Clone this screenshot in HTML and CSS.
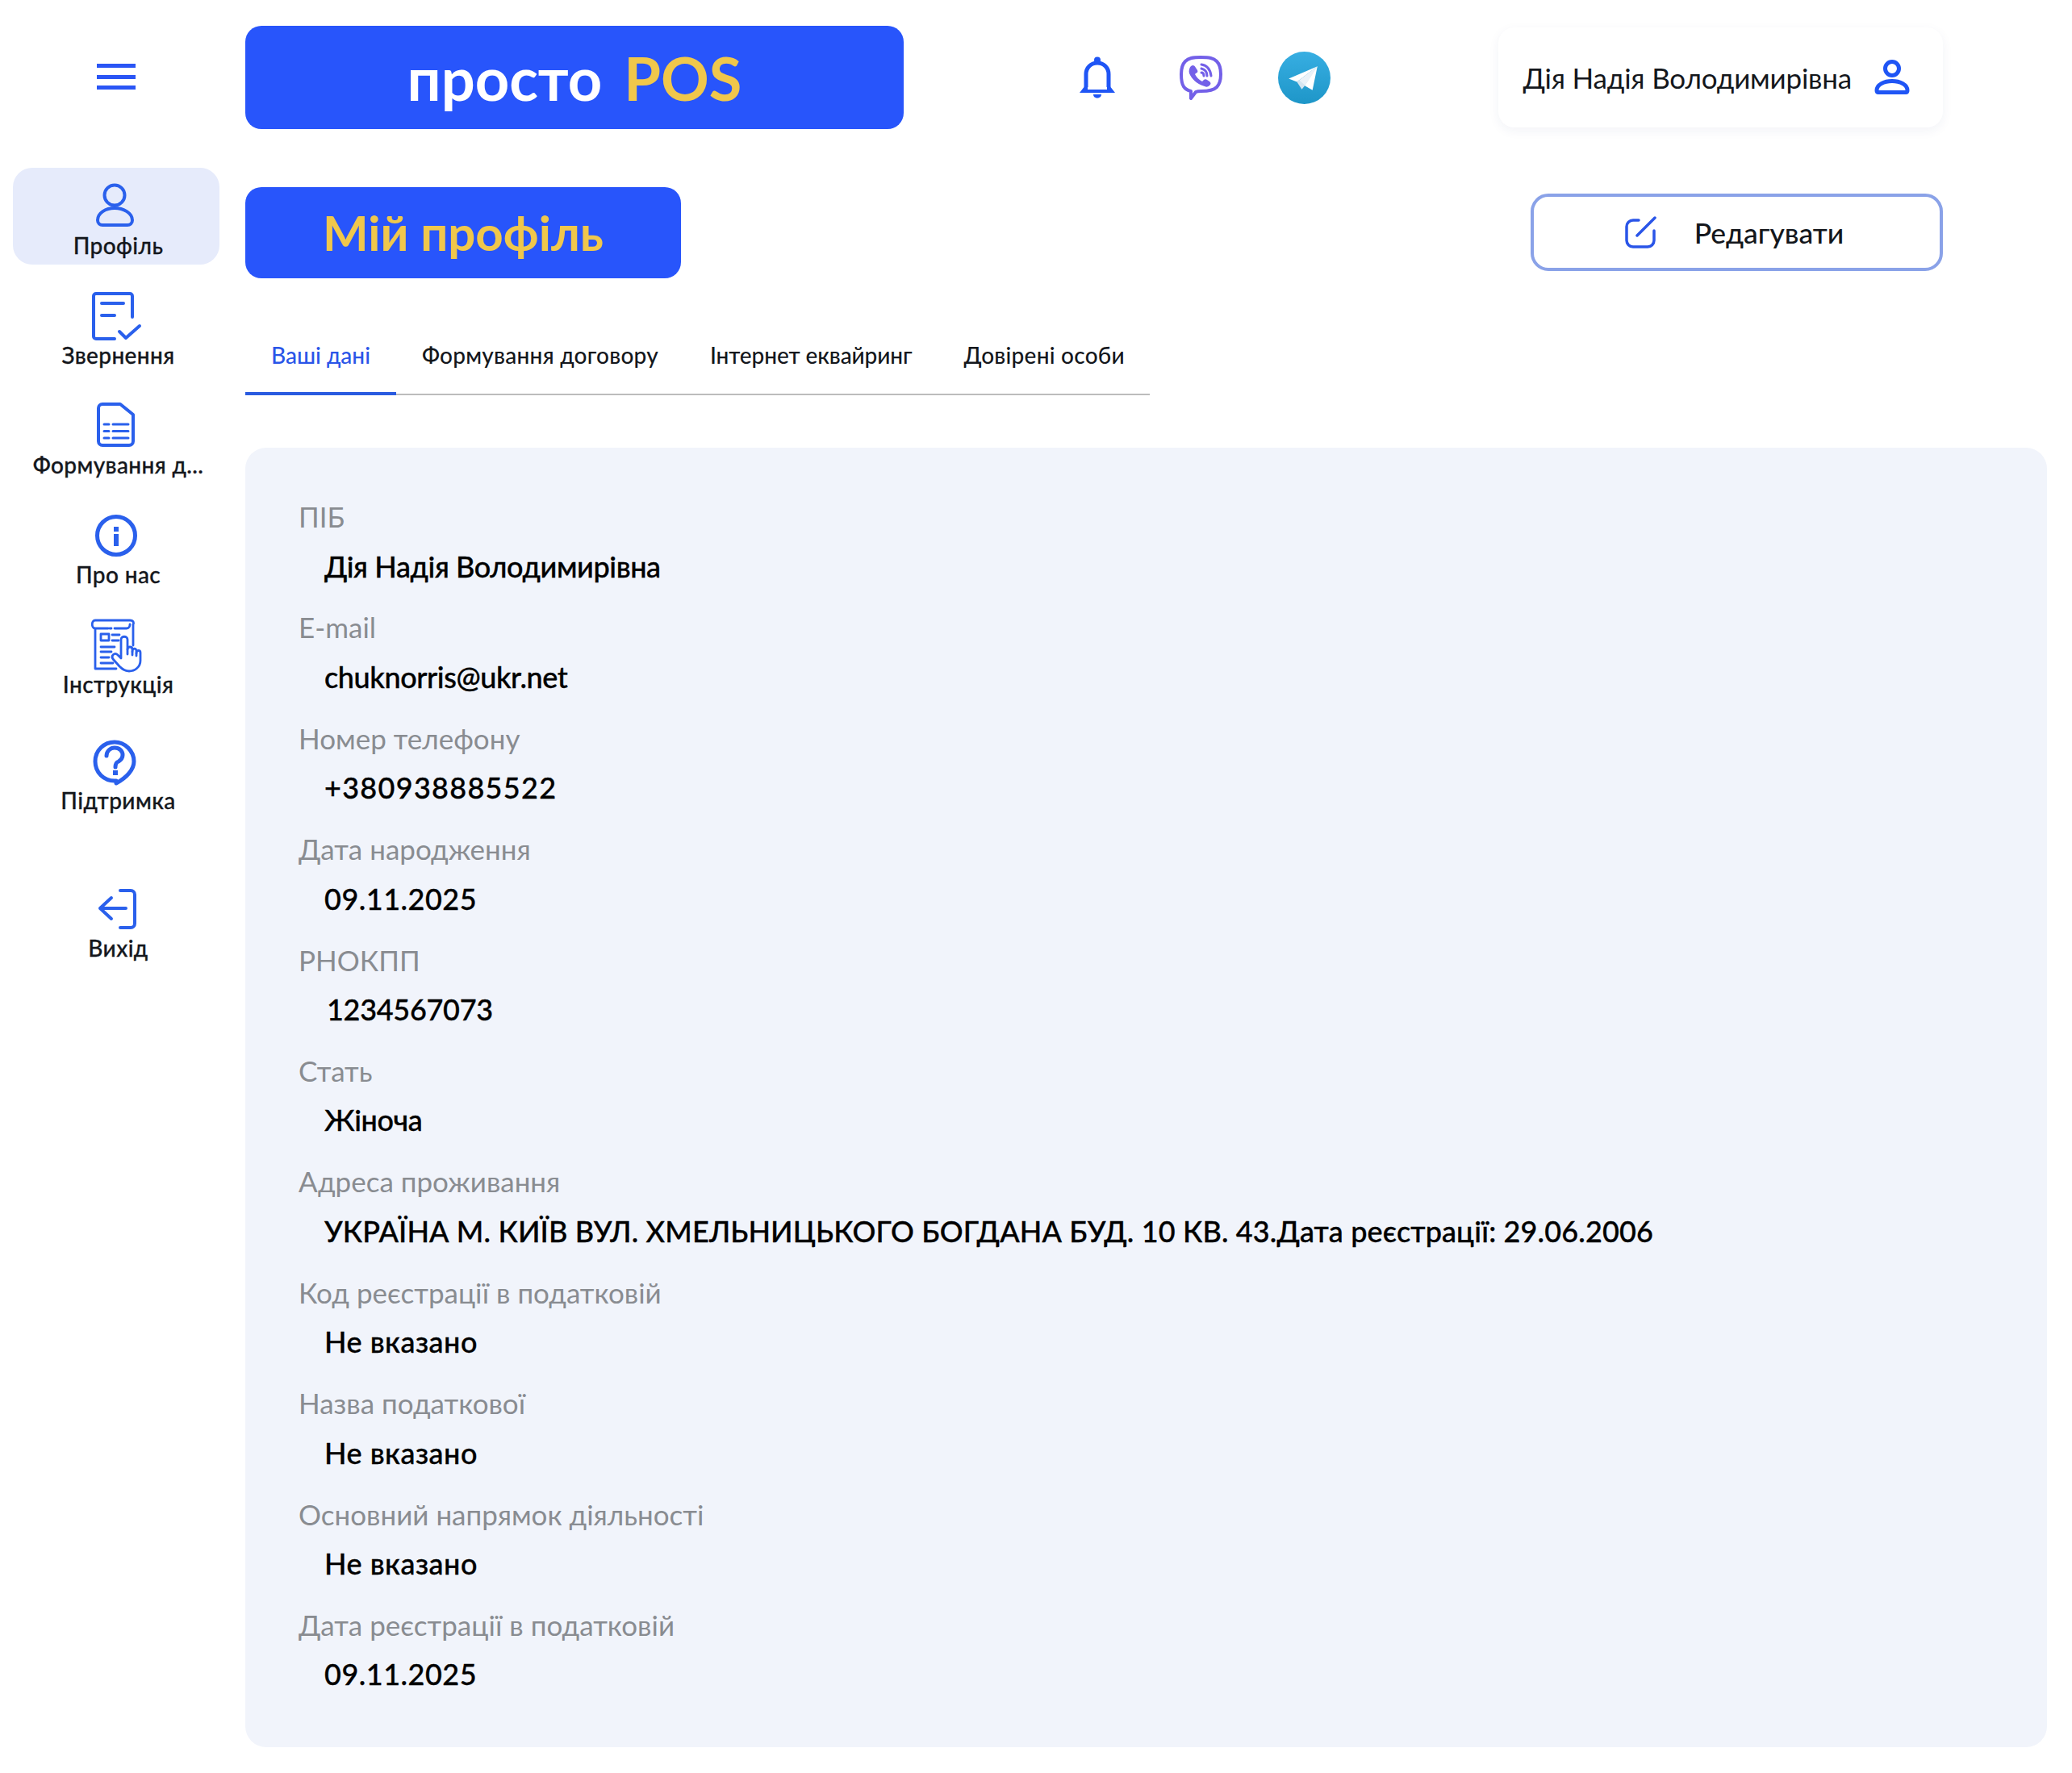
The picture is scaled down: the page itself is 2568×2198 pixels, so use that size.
FILE: index.html
```html
<!DOCTYPE html>
<html lang="uk">
<head>
<meta charset="utf-8">
<title>Мій профіль</title>
<link rel="stylesheet" href="styles.css">
</head>
<body>
<div class="app">
  <aside class="sidebar">
    <div class="burger"><span></span><span></span><span></span></div>
    <nav class="nav">
      <a class="nav-item active">
        <svg class="nav-icon" viewBox="0 0 72 72"><circle cx="34" cy="25" r="12.5"/><path d="M13 56c0-9 10-15 21-15s22 6 22 15c0 4-3 6-6 6H19c-3 0-6-2-6-6z"/></svg>
        <span class="nav-label">Профіль</span>
      </a>
      <a class="nav-item">
        <svg class="nav-icon" viewBox="0 0 72 72"><path d="M56 40V14a3 3 0 0 0-3-3H11a3 3 0 0 0-3 3v50a3 3 0 0 0 3 3h23"/><path d="M18 23h27M18 38h16M40 58l8 8 17-15"/></svg>
        <span class="nav-label">Звернення</span>
      </a>
      <a class="nav-item">
        <svg class="nav-icon" viewBox="0 0 72 72"><path d="M19 12h22l16 13v33a5 5 0 0 1-5 5H19a5 5 0 0 1-5-5V17a5 5 0 0 1 5-5z"/><path class="thin" d="M21 37h6M32 37h19M21 45.500h6M32 45.500h19M21 54h6M32 54h19"/></svg>
        <span class="nav-label">Формування д...</span>
      </a>
      <a class="nav-item">
        <svg class="nav-icon" viewBox="0 0 72 72"><circle class="bold" cx="36" cy="39" r="23.500"/><path class="i-mark" d="M36 28v6M36 37v15"/></svg>
        <span class="nav-label">Про нас</span>
      </a>
      <a class="nav-item">
        <svg class="nav-icon fine" viewBox="0 0 72 72"><path d="M10 18v50h26M57 13v26M10 8h43c5 0 5 4 4 5M10 8c-5 0-5 10 0 10h16M34 18h15M49 18c3 0 4-3 4-5M28 18h2"/><path d="M17 25h10v8H17zM31 26h9M31 33h8M17 41h17M17 47h13M17 54h10M17 61h15"/><path class="hand" d="M42 48V32c0-5 8-5 8 0v12c0-4 6-4 6 0v3c0-5 5-5 5-1v3c0-5 5-4 5-1v10c0 8-7 13-14 13-6 0-9-3-12-6l-8-9c-3-4 2-9 6-5l4 4z"/><path d="M50 44v6M56 47v4M61 49v3"/></svg>
        <span class="nav-label">Інструкція</span>
      </a>
      <a class="nav-item support">
        <svg class="nav-icon" viewBox="0 0 72 72"><path class="bold" d="M34 63c-13 0-24-10-24-24S21 15 34 15s24 11 24 24c0 10-9 20-22 27v-3z"/><path class="bold" d="M24 32c0-6 5-10 10-10 6 0 10 4 10 9 0 4-2 6-5 8-3 1-4 3-4 7"/><path class="i-mark" d="M35 50v6"/></svg>
        <span class="nav-label">Підтримка</span>
      </a>
      <a class="nav-item logout">
        <svg class="nav-icon" viewBox="0 0 72 72"><path d="M41 16h13a5 5 0 0 1 5 5v36a5 5 0 0 1-5 5H41M48 38H16M30 25L16 38l14 13"/></svg>
        <span class="nav-label">Вихід</span>
      </a>
    </nav>
  </aside>
  <main class="main">
    <header class="topbar">
      <div class="logo"><span class="logo-white">просто</span><span class="logo-yellow">POS</span></div>
      <div class="channels">
        <svg class="bell" viewBox="0 0 44 52"><path d="M8 38V22C8 14 14 8 22 8s14 6 14 14v16"/><circle class="fill" cx="22" cy="4.500" r="4"/><path class="fill" d="M0 45l7-9h3v5h24v-5h3l7 9zM17 47h10c0 6-10 6-10 0z"/></svg>
        <svg class="viber" viewBox="0 0 54 57"><path d="M27 3c11 0 16 1 20 5s5 9 5 16-1 12-5 16-10 5-19 5c-3 0-5 0-7 1l-6 8v-9C7 43 3 39 3 24c0-7 1-12 5-16s9-5 19-5z"/><path class="fill" d="M15 14l2-1c2 0 3 1 4 3l2 3c1 2 0 3-2 4l-1 1c2 4 5 7 9 9l2-2c1-1 3-1 4 0l3 2c2 2 2 3 0 5-2 2-4 2-6 1-10-3-16-9-19-16-1-3 0-7 2-9z"/><path class="thin" d="M28 12c7 1 11 6 12 14M28 17c4 1 7 3 7 9M28 22c2 0 3 2 3 4"/></svg>
        <svg class="telegram" viewBox="0 0 64 64"><defs><linearGradient id="tg" x1="0.500" y1="0" x2="0.500" y2="1"><stop offset="0" stop-color="#37aee2"/><stop offset="1" stop-color="#1e96c8"/></linearGradient></defs><circle cx="32" cy="32" r="32" fill="url(#tg)"/><path fill="#fff" d="M48 18L13 33l10 4zM48 18L42 47 30 40z"/><path fill="#d5e5f0" d="M48 18L23 37l6 9 4-5z"/><path fill="#eaf2f8" d="M48 18L26 35l7 6z"/></svg>
      </div>
      <div class="user-chip">
        <span class="user-name">Дія Надія Володимирівна</span>
        <svg class="user-icon" viewBox="0 0 44 44"><circle cx="22" cy="11" r="8.500"/><path d="M3 38c0-7 9-11.500 19-11.500S41 31 41 38c0 2-1 2.500-2 2.500H5c-1 0-2-.5-2-2.500z"/></svg>
      </div>
    </header>
    <section class="title-row">
      <h1 class="page-title">Мій профіль</h1>
      <button class="edit-btn">
        <svg class="edit-icon" viewBox="0 0 38 38"><path d="M17 4h-7a8 8 0 0 0-8 8v17a8 8 0 0 0 8 8h18a8 8 0 0 0 8-8V17"/><path d="M37 1L15 23"/></svg>
        <span>Редагувати</span>
      </button>
    </section>
    <div class="tabs">
      <a class="tab tab-active">Ваші дані</a>
      <a class="tab">Формування договору</a>
      <a class="tab tab-narrow">Інтернет еквайринг</a>
      <a class="tab">Довірені особи</a>
    </div>
    <section class="panel">
      <div class="field"><div class="field-label">ПІБ</div><div class="field-value v-tight">Дія Надія Володимирівна</div></div>
      <div class="field"><div class="field-label">E-mail</div><div class="field-value v-tight">chuknorris@ukr.net</div></div>
      <div class="field"><div class="field-label">Номер телефону</div><div class="field-value v-phone">+380938885522</div></div>
      <div class="field"><div class="field-label">Дата народження</div><div class="field-value v-open">09.11.2025</div></div>
      <div class="field"><div class="field-label">РНОКПП</div><div class="field-value v-code">1234567073</div></div>
      <div class="field"><div class="field-label">Стать</div><div class="field-value v-tight">Жіноча</div></div>
      <div class="field"><div class="field-label">Адреса проживання</div><div class="field-value v-long">УКРАЇНА М. КИЇВ ВУЛ. ХМЕЛЬНИЦЬКОГО БОГДАНА БУД. 10 КВ. 43.Дата реєстрації: 29.06.2006</div></div>
      <div class="field"><div class="field-label">Код реєстрації в податковій</div><div class="field-value v-open">Не вказано</div></div>
      <div class="field"><div class="field-label">Назва податкової</div><div class="field-value v-open">Не вказано</div></div>
      <div class="field"><div class="field-label">Основний напрямок діяльності</div><div class="field-value v-open">Не вказано</div></div>
      <div class="field"><div class="field-label">Дата реєстрації в податковій</div><div class="field-value v-open">09.11.2025</div></div>
    </section>
  </main>
</div>
</body>
</html>
```
FILE: styles.css
```css
* { box-sizing: border-box; }
html, body { margin: 0; padding: 0; background: #fff; }
body { font-family: "Lato", "Noto Sans", sans-serif; color: #14171c; }
.app { display: grid; grid-template-columns: 304px 1fr; min-height: 2198px; }

.sidebar { display: flex; flex-direction: column; padding-top: 79px; }
.burger { display: flex; flex-direction: column; justify-content: space-between; width: 48px; height: 32px; margin-left: 120px; }
.burger span { display: block; height: 5px; background: #2a55f5; }
.nav { display: flex; flex-direction: column; gap: 16px; margin-top: 97px; margin-left: 16px; width: 256px; }
.nav-item { display: flex; flex-direction: column; align-items: center; height: 120px; padding-top: 9px; border-radius: 24px; }
.nav-item.active { background: #e6ebfb; }
.nav-item.support { margin-top: 8px; }
.nav-item.logout { margin-top: 47px; }
.nav-icon { display: block; width: 72px; height: 72px; overflow: visible; fill: none; stroke: #2a60ec; stroke-width: 4; stroke-linecap: round; stroke-linejoin: round; }
.nav-icon .thin { stroke-width: 3; }
.nav-icon .bold { stroke-width: 5; }
.nav-icon .i-mark { stroke-width: 6; stroke-linecap: butt; }
.nav-icon.fine { stroke-width: 2.8; }
.nav-icon .hand { fill: #fff; }
.nav-label { margin-top: -1px; margin-left: 5px; font-size: 28px; line-height: 32px; font-weight: 500; letter-spacing: 0.4px; white-space: nowrap; -webkit-text-stroke: 0.3px #14171c; }

.main { display: flex; flex-direction: column; padding: 32px 31px 32px 0; }
.topbar { display: flex; align-items: center; height: 128px; }
.logo { display: flex; align-items: center; justify-content: center; gap: 27px; width: 816px; height: 128px; border-radius: 20px; background: #2855fb; font-size: 74px; font-weight: 700; }
.logo-white { color: #fff; }
.logo-yellow { color: #f0c74b; }
.channels { display: flex; align-items: center; margin-left: 218px; }
.bell { width: 44px; height: 52px; fill: none; stroke: #1f55f5; stroke-width: 5; overflow: visible; }
.bell .fill { fill: #1f55f5; stroke: none; }
.viber { width: 54px; height: 57px; margin-left: 79px; fill: none; stroke: #7360e8; stroke-width: 4; stroke-linejoin: round; }
.viber .fill { fill: #7360e8; stroke: none; }
.viber .thin { stroke-width: 3; stroke-linecap: round; }
.telegram { width: 65px; height: 65px; margin-left: 69px; }
.user-chip { display: flex; align-items: center; gap: 28px; height: 124px; margin-left: auto; margin-right: 129px; padding: 0 41px 0 31px; border-radius: 20px; background: #fff; box-shadow: 0 4px 14px rgba(30, 50, 120, 0.06); }
.user-name { font-size: 35px; letter-spacing: -0.2px; white-space: nowrap; }
.user-icon { width: 44px; height: 44px; fill: none; stroke: #1f55f5; stroke-width: 5; stroke-linejoin: round; }

.title-row { display: flex; align-items: flex-start; justify-content: space-between; margin-top: 72px; padding-right: 129px; }
.page-title { display: flex; align-items: center; justify-content: center; width: 540px; height: 113px; margin: 0; padding-bottom: 2px; border-radius: 20px; background: #2855fb; color: #f0c74b; font-size: 60px; font-weight: 700; }
.edit-btn { display: flex; align-items: center; justify-content: center; gap: 48px; width: 511px; height: 96px; margin-top: 8px; padding: 0 6px 0 0; border: 4px solid #8aa2e8; border-radius: 22px; background: #fff; font-family: inherit; font-size: 35.5px; font-weight: 500; color: #14171c; }
.edit-icon { width: 38px; height: 38px; fill: none; stroke: #2a55e8; stroke-width: 3.5; stroke-linecap: round; overflow: visible; }

.tabs { display: flex; width: 1121px; margin-top: 32px; border-bottom: 2px solid #bcbcbc; }
.tab { height: 113px; padding: 43px 32px 0; font-size: 28px; line-height: 40px; font-weight: 500; letter-spacing: 0.25px; white-space: nowrap; margin-bottom: -2px; }
.tab-narrow { letter-spacing: -0.1px; }
.tab-active { color: #2a55e8; border-bottom: 4px solid #2a5be0; letter-spacing: 0; }

.panel { display: flex; flex-direction: column; gap: 31.9px; margin-top: 65px; padding: 63px 66px 68.5px; border-radius: 26px; background: #f1f4fb; }
.field-label { font-size: 35px; line-height: 44px; color: #898c91; }
.field-value { margin-top: 17.5px; padding-left: 32px; font-size: 36px; line-height: 44px; font-weight: 500; color: #000; white-space: nowrap; -webkit-text-stroke: 0.35px #000; }
.v-tight { letter-spacing: -0.4px; }
.v-phone { letter-spacing: 1.3px; }
.v-open { letter-spacing: 0.5px; }
.v-code { letter-spacing: -0.3px; padding-left: 35px; }
.v-long { letter-spacing: 0.13px; }
```
